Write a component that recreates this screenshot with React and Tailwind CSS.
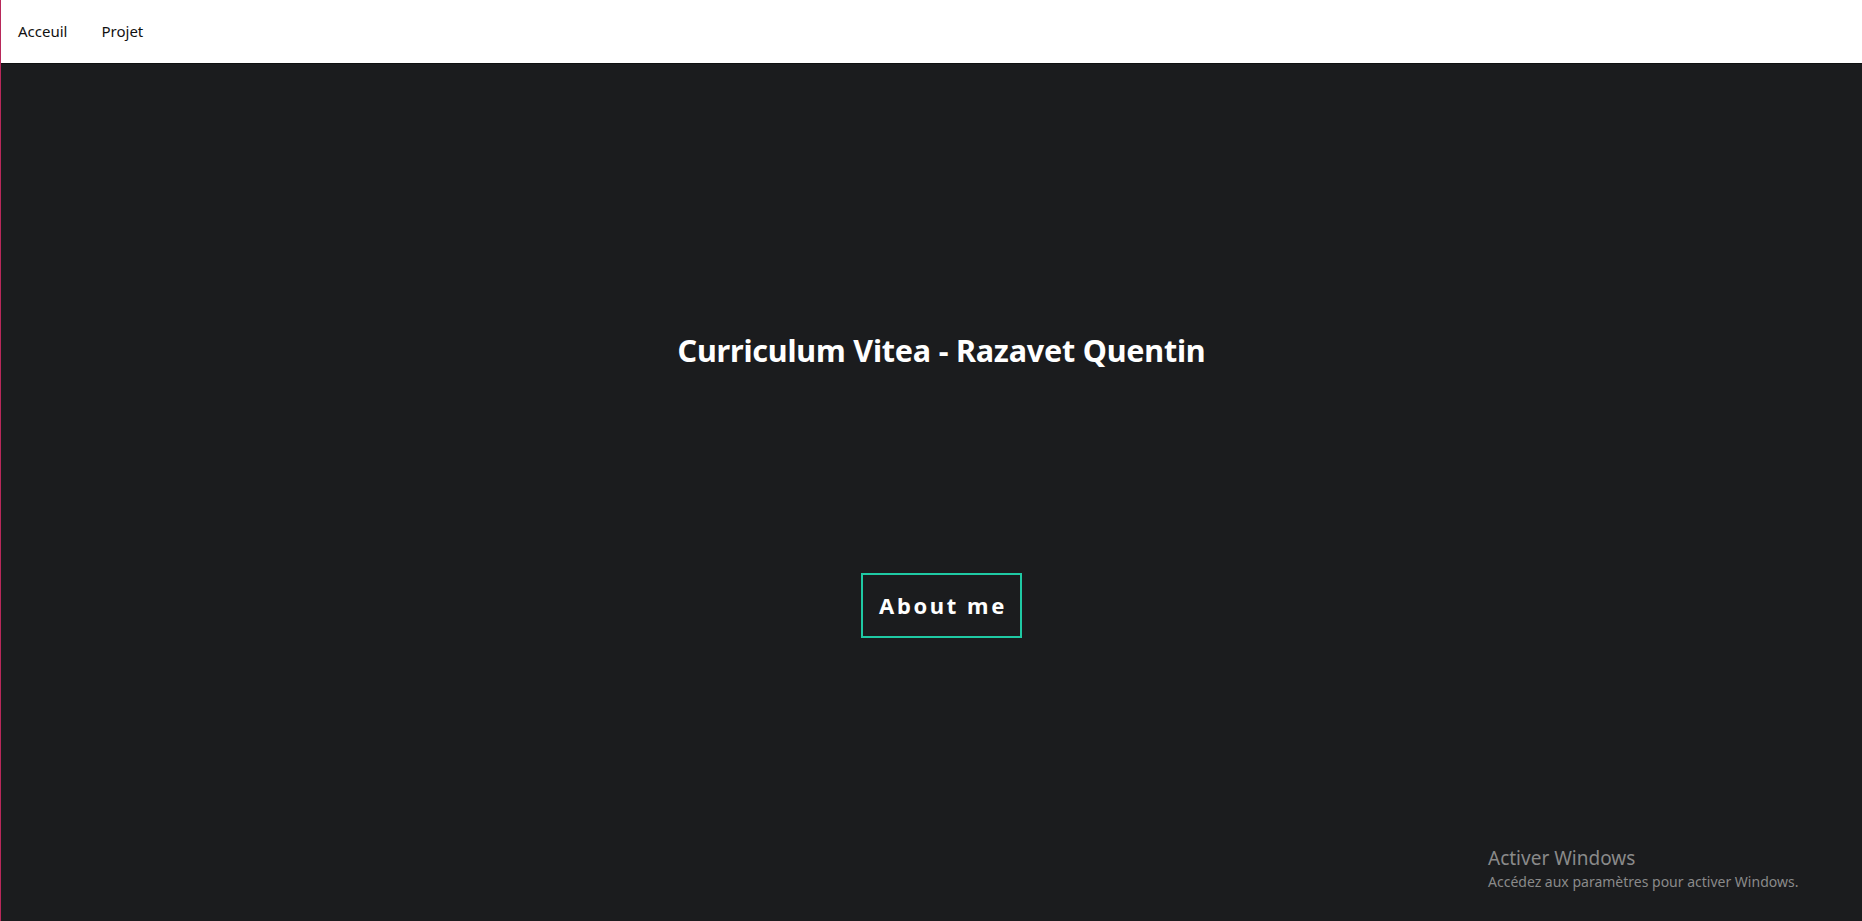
import React from 'react';

const navLinks = ['Acceuil', 'Projet'];

export default function App() {
  return (
    <div
      className="relative w-full h-[921px] flex flex-col bg-[#1b1c1e] border-l border-l-[#b8285a] overflow-hidden"
      style={{ fontFamily: '"Noto Sans", "Open Sans", sans-serif' }}
    >
      {/* Header */}
      <nav className="h-[64px] flex items-center gap-[34px] pl-[17px] bg-white border-b border-b-[#0f1011]">
        {navLinks.map((link) => (
          <a key={link} href="#" className="text-[15px] text-[#111] leading-none pb-[1px]">
            {link}
          </a>
        ))}
      </nav>

      {/* Hero */}
      <main className="flex-1 flex flex-col items-center pt-[266px] pl-[20px]">
        <h1 className="text-[30.5px] font-bold text-white leading-[40px] tracking-[-0.2px]">
          Curriculum Vitea - Razavet Quentin
        </h1>
        <button className="mt-[203px] w-[161px] h-[65px] border-2 border-[#1fc9a4] text-white text-[22px] font-bold tracking-[2.6px] flex items-center justify-center pl-[3px]">
          About me
        </button>
      </main>

      {/* Windows watermark */}
      <div className="absolute left-[1487px] top-[847px] text-[#8a8a8a] leading-tight">
        <div className="text-[19px]">Activer Windows</div>
        <div className="text-[14px] mt-[2px]">Accédez aux paramètres pour activer Windows.</div>
      </div>
    </div>
  );
}
